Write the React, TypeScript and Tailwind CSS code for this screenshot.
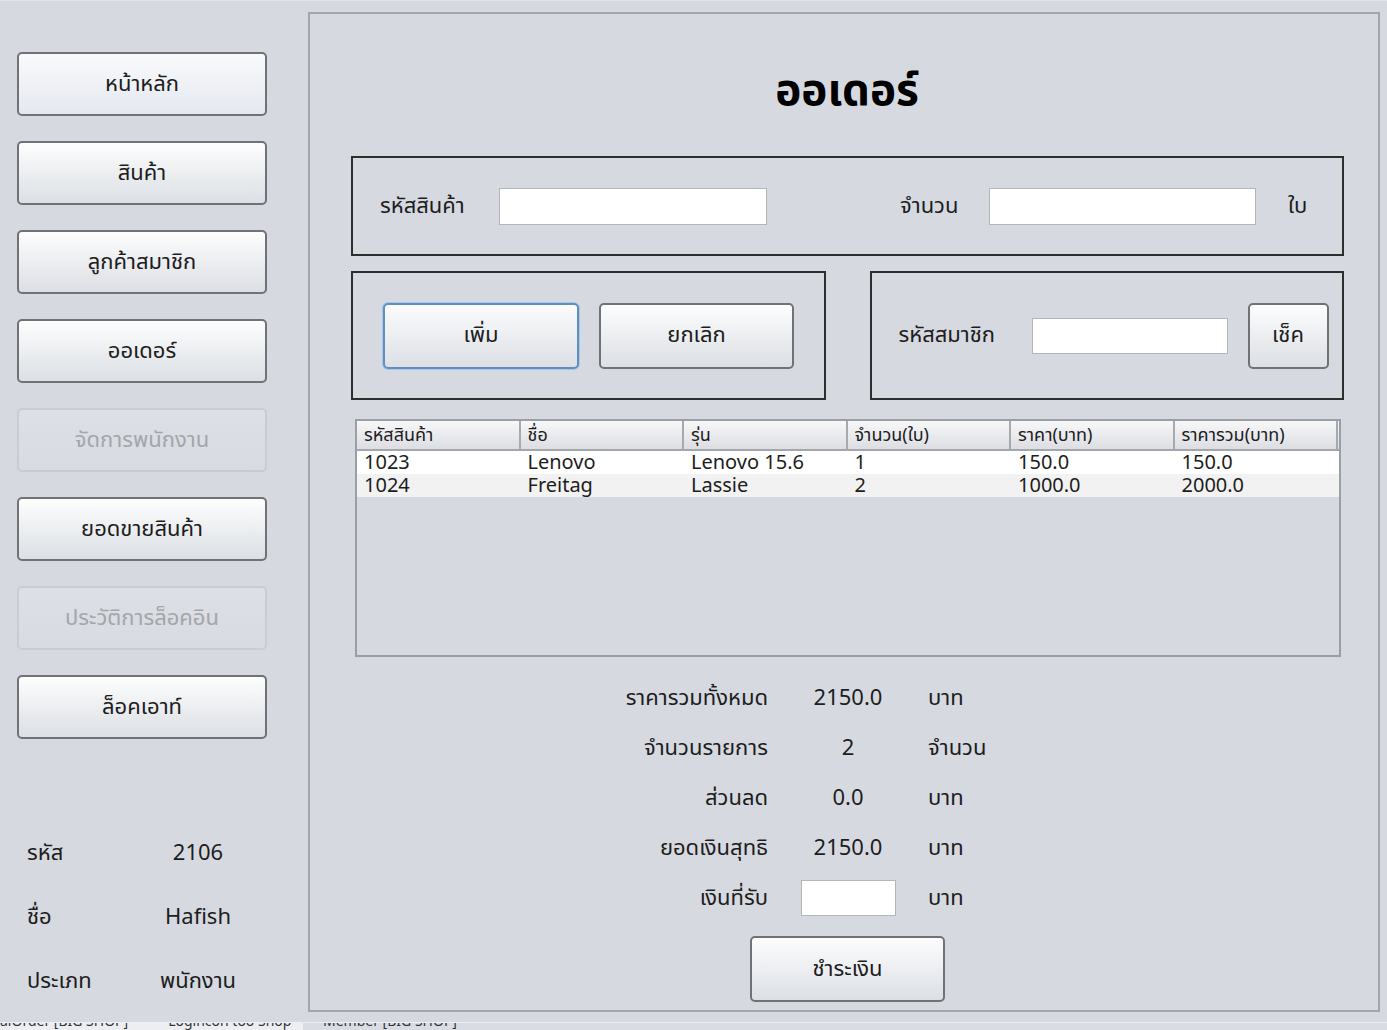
import { useState } from "react";

const FONT = { fontFamily: "Tahoma, 'Noto Sans Thai', 'Noto Sans', 'DejaVu Sans', sans-serif" };

interface BtnProps {
  label: string;
  className?: string;
  disabled?: boolean;
  focused?: boolean;
  hover?: boolean;
}

function Btn({ label, className = "", disabled, focused, hover }: BtnProps) {
  let look = "border-[#6f7277] from-[#fdfdfd] via-[#eceef1] to-[#dcdfe4] text-[#1d1d1d]";
  if (disabled) look = "border-[#c9ccd2] from-[#dde0e6] via-[#dadde3] to-[#d8dbe1] text-[#a3a6ab]";
  if (hover) look = "border-[#6f7277] from-[#f9fafc] via-[#eff1f6] to-[#e4e8f0] text-[#1d1d1d]";
  if (focused) look = "border-[#5f8ec0] from-[#fbfbfc] via-[#eceef1] to-[#dcdfe4] text-[#1d1d1d] shadow-[0_0_0_1px_#a9c6e6]";
  return (
    <button
      disabled={disabled}
      className={`flex items-center justify-center rounded-[5px] border-2 bg-linear-to-b text-[22px] ${look} ${className}`}
    >
      {label}
    </button>
  );
}

function Field({ className = "" }: { className?: string }) {
  return <input className={`border border-[#b3b5b9] bg-white outline-none ${className}`} />;
}

const menu = [
  { label: "หน้าหลัก", hover: true },
  { label: "สินค้า" },
  { label: "ลูกค้าสมาชิก" },
  { label: "ออเดอร์" },
  { label: "จัดการพนักงาน", disabled: true },
  { label: "ยอดขายสินค้า" },
  { label: "ประวัติการล็อคอิน", disabled: true },
  { label: "ล็อคเอาท์" },
];

const columns = ["รหัสสินค้า", "ชื่อ", "รุ่น", "จำนวน(ใบ)", "ราคา(บาท)", "ราคารวม(บาท)"];

const rows = [
  ["1023", "Lenovo", "Lenovo 15.6", "1", "150.0", "150.0"],
  ["1024", "Freitag", "Lassie", "2", "1000.0", "2000.0"],
];

const summary = [
  { label: "ราคารวมทั้งหมด", value: "2150.0", unit: "บาท" },
  { label: "จำนวนรายการ", value: "2", unit: "จำนวน" },
  { label: "ส่วนลด", value: "0.0", unit: "บาท" },
  { label: "ยอดเงินสุทธิ", value: "2150.0", unit: "บาท" },
];

export default function App() {
  const [active] = useState("ออเดอร์");

  return (
    <div style={FONT} className="h-[1030px] w-[1387px] overflow-hidden bg-[#d6d9e0] text-[#1d1d1d]">
      <div className="h-[1px] bg-[#e2e4e9]" />
      <div className="flex h-[1021px]">
        {/* Sidebar */}
        <div className="flex w-[308px] flex-col pl-[17px] pt-[51px]">
          <div className="flex flex-col gap-[25px]">
            {menu.map((m) => (
              <Btn
                key={m.label}
                label={m.label}
                disabled={m.disabled}
                hover={m.hover && m.label !== active}
                className="h-[64px] w-[250px]"
              />
            ))}
          </div>
          <div className="mt-[96px] grid grid-cols-[113px_116px] gap-y-[26px] pl-[10px] text-[22px] leading-[38px]">
            <span>รหัส</span>
            <span className="text-center">2106</span>
            <span>ชื่อ</span>
            <span className="text-center">Hafish</span>
            <span>ประเภท</span>
            <span className="text-center">พนักงาน</span>
          </div>
        </div>

        {/* Main panel */}
        <div className="mt-[11px] flex h-[1000px] w-[1072px] flex-col border-2 border-[#a2a6ad] pl-[41px]">
          <h1 className="mt-[51px] h-[54px] w-[992px] text-center text-[44px] font-bold leading-[54px] text-black">
            ออเดอร์
          </h1>

          <div className="mt-[37px] flex h-[100px] w-[993px] items-center border-2 border-[#2e2e2e] pl-[27px] text-[22px]">
            <span className="w-[119px]">รหัสสินค้า</span>
            <Field className="h-[37px] w-[268px]" />
            <span className="ml-[133px] w-[89px]">จำนวน</span>
            <Field className="h-[37px] w-[267px]" />
            <span className="ml-[32px]">ใบ</span>
          </div>

          <div className="mt-[15px] flex w-[993px] gap-[44px]">
            <div className="flex h-[129px] w-[475px] items-center gap-[20px] border-2 border-[#2e2e2e] pl-[30px]">
              <Btn label="เพิ่ม" focused className="h-[66px] w-[196px]" />
              <Btn label="ยกเลิก" className="h-[66px] w-[195px]" />
            </div>
            <div className="flex h-[129px] w-[475px] items-center border-2 border-[#2e2e2e] pl-[27px] text-[22px]">
              <span className="w-[133px]">รหัสสมาชิก</span>
              <Field className="h-[36px] w-[196px]" />
              <Btn label="เช็ค" className="ml-[20px] h-[66px] w-[81px]" />
            </div>
          </div>

          {/* Table */}
          <div className="ml-[4px] mt-[19px] h-[238px] w-[986px] border-2 border-[#9a9ea5] bg-[#d6d9e0]">
            <div className="grid h-[30px] grid-cols-6 border-b-2 border-[#a3a6ab] bg-linear-to-b from-[#f8f8f9] to-[#dcdee3] pr-[1px]">
              {columns.map((c) => (
                <div key={c} className="flex items-center border-r-2 border-[#a6a9ae] pl-[7px] text-[18px]">
                  {c}
                </div>
              ))}
            </div>
            {rows.map((r, i) => (
              <div key={r[0]} className={`grid h-[23px] grid-cols-6 pr-[1px] ${i === 0 ? "bg-white" : "bg-[#f2f2f2]"}`}>
                {r.map((v, j) => (
                  <div key={j} className="flex items-center pl-[7px] text-[20px] leading-[20px]">
                    <span>{v}</span>
                  </div>
                ))}
              </div>
            ))}
          </div>

          {/* Summary */}
          <div className="ml-[209px] mt-[16px] grid grid-cols-[208px_160px_100px] text-[22px]">
            {summary.map((s) => (
              <div key={s.label} className="contents">
                <span className="flex h-[50px] items-center justify-end">{s.label}</span>
                <span className="flex h-[50px] items-center justify-center">{s.value}</span>
                <span className="flex h-[50px] items-center">{s.unit}</span>
              </div>
            ))}
            <span className="flex h-[50px] items-center justify-end">เงินที่รับ</span>
            <span className="flex h-[50px] items-center justify-center">
              <Field className="h-[36px] w-[95px]" />
            </span>
            <span className="flex h-[50px] items-center">บาท</span>
          </div>

          <Btn label="ชำระเงิน" className="ml-[399px] mt-[13px] h-[66px] w-[195px]" />
        </div>
      </div>

      {/* taskbar remnant */}
      <div className="h-[1px] bg-[#eef0f3]" />
      <div className="flex h-[7px] overflow-hidden bg-[#d9dce2] text-[14px] leading-[14px] text-[#333]">
        <div className="-mt-[8px] flex w-[303px] gap-[40px] whitespace-nowrap bg-[#eceef1]">
          <span>alOrder [BIG SHOP]</span>
          <span>Logincon too Shop</span>
        </div>
        <div className="-mt-[8px] whitespace-nowrap pl-[20px]">
          <span>Member [BIG SHOP]</span>
        </div>
      </div>
    </div>
  );
}
